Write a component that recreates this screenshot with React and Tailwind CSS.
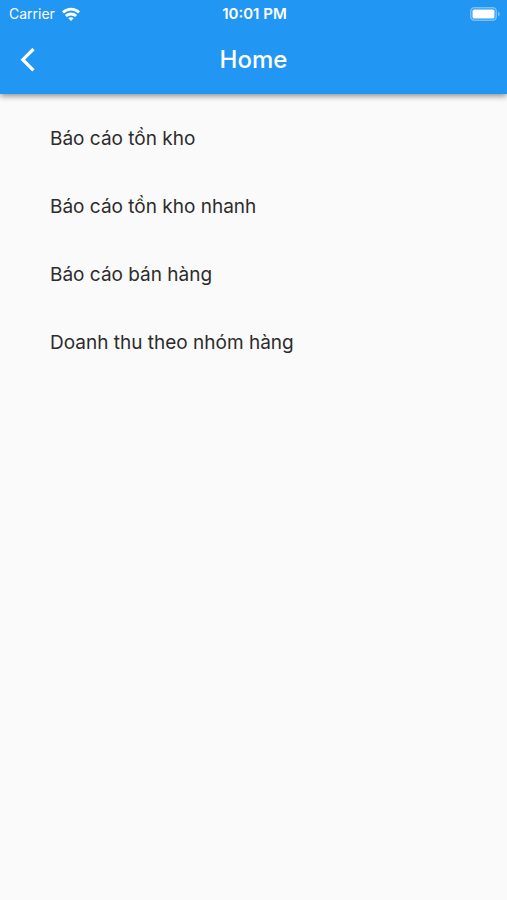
const reports = [
  { id: 'inventory', label: 'Báo cáo tồn kho' },
  { id: 'inventory-quick', label: 'Báo cáo tồn kho nhanh' },
  { id: 'sales', label: 'Báo cáo bán hàng' },
  { id: 'revenue-by-group', label: 'Doanh thu theo nhóm hàng' },
];

function WifiIcon() {
  return (
    <svg viewBox="0 0 18 14" className="h-[14px] w-[18px]" fill="none" stroke="currentColor" strokeWidth="2.8" aria-hidden="true">
      <path d="M1 5.4C5.6.9 12.4.9 17 5.4" />
      <path d="M3.9 9c2.9-2.7 7.3-2.7 10.2 0" />
      <path d="M9 14 6.3 11.3c1.5-1.3 3.9-1.3 5.4 0z" fill="currentColor" stroke="none" />
    </svg>
  );
}

function BatteryIcon() {
  return (
    <svg viewBox="0 0 30 14" className="h-[14px] w-[30px]" fill="none" aria-hidden="true">
      <rect x="0.8" y="0.8" width="25.4" height="12.4" rx="3.5" stroke="white" strokeOpacity="0.4" strokeWidth="1.5" />
      <rect x="2.5" y="2.5" width="22" height="9" rx="1.5" fill="white" />
      <path d="M28 4.5c2.2.8 2.2 4.2 0 5z" fill="white" fillOpacity="0.4" />
    </svg>
  );
}

function StatusBar() {
  return (
    <div className="grid h-[27px] grid-cols-3 items-center pr-[7px] pl-[9px]">
      <div className="flex items-center gap-[7px] text-sm">
        <span>Carrier</span>
        <WifiIcon />
      </div>
      <span className="text-center text-[15px] leading-5 font-semibold">10:01 PM</span>
      <div className="flex justify-end">
        <BatteryIcon />
      </div>
    </div>
  );
}

export default function App() {
  return (
    <div className="min-h-screen bg-[#fafafa] font-['Inter','Noto_Sans',sans-serif]">
      <header className="bg-[#2196f3] text-white shadow-[0_2px_6px_rgba(0,0,0,0.45)]">
        <StatusBar />
        <div className="grid h-[67px] grid-cols-3 items-center px-4 pb-[2px]">
          <button type="button" aria-label="Back" className="flex size-6 items-center justify-center">
            <svg viewBox="0 0 24 24" className="size-6" fill="none" stroke="currentColor" strokeWidth="3.2" aria-hidden="true">
              <path d="M17.5 1 6.8 11.7l10.7 10.7" />
            </svg>
          </button>
          <h1 className="text-center text-2xl font-medium">Home</h1>
        </div>
      </header>
      <main className="px-[50px] pt-[11px]">
        <ul>
          {reports.map((report) => (
            <li key={report.id}>
              <button type="button" className="flex h-[68px] w-full items-center text-left text-[19px] text-[#2c2c2c]">
                {report.label}
              </button>
            </li>
          ))}
        </ul>
      </main>
    </div>
  );
}
